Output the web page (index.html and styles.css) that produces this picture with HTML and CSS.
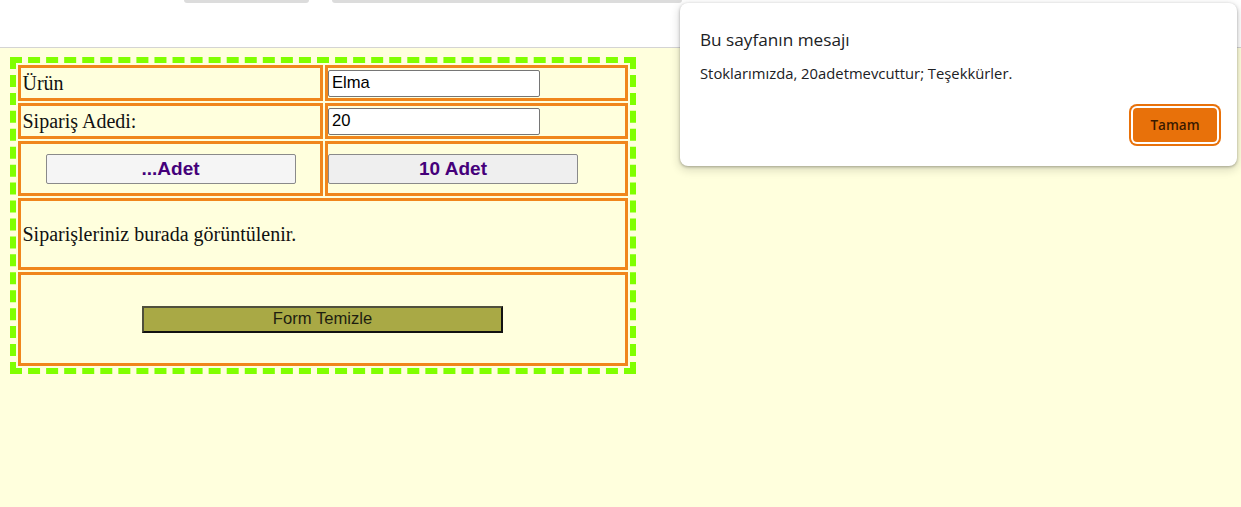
FILE: index.html
```html
<!DOCTYPE html>
<html lang="tr">
<head>
<meta charset="utf-8">
<title>Sipariş Formu</title>
<link rel="stylesheet" href="styles.css">
</head>
<body>
<header class="chrome">
  <div class="chrome-strip">
    <span class="strip strip-a"></span>
    <span class="strip strip-b"></span>
  </div>
</header>
<main class="page">
  <table class="order">
    <tr class="row-field">
      <td class="label col-left">Ürün</td>
      <td class="field col-right"><input class="text-input" type="text" value="Elma"></td>
    </tr>
    <tr class="row-field">
      <td class="label col-left">Sipariş Adedi:</td>
      <td class="field col-right"><input class="text-input" type="text" value="20"></td>
    </tr>
    <tr class="row-buttons">
      <td class="center col-left"><button class="qty-btn qty-btn-light" type="button">...Adet</button></td>
      <td class="field col-right"><button class="qty-btn" type="button">10 Adet</button></td>
    </tr>
    <tr class="row-output">
      <td colspan="2" class="label">Siparişleriniz burada görüntülenir.</td>
    </tr>
    <tr class="row-reset">
      <td colspan="2" class="center"><button class="reset-btn" type="button">Form Temizle</button></td>
    </tr>
  </table>
</main>
<div class="dialog">
  <div class="dialog-title">Bu sayfanın mesajı</div>
  <div class="dialog-message">Stoklarımızda, 20adetmevcuttur; Teşekkürler.</div>
  <div class="dialog-actions">
    <button class="dialog-btn" type="button">Tamam</button>
  </div>
</div>
</body>
</html>
```
FILE: styles.css
```css
html, body {
  margin: 0;
  padding: 0;
}

body {
  background: #ffffdd;
  font-family: "Liberation Serif", "Times New Roman", serif;
  color: #111;
  min-height: 507px;
  position: relative;
}

.chrome {
  height: 47px;
  background: #ffffff;
  border-bottom: 1px solid #d4d4d4;
}

.chrome-strip {
  display: flex;
  padding-left: 184px;
  gap: 23px;
}

.strip {
  display: block;
  height: 3px;
  background: #dcdcdc;
  border-radius: 0 0 4px 4px;
}

.strip-a { width: 125px; }
.strip-b { width: 350px; }

.page {
  padding: 9px 0 0 10px;
}

.order {
  border: 6px dashed #80ff00;
  border-spacing: 2px;
}

.order td {
  box-sizing: border-box;
  border: 3px solid #f0861c;
  padding: 0 2px;
  font-size: 20px;
  vertical-align: middle;
}

.order td.col-left { width: 305px; }
.order td.col-right { width: 303px; }

.order td.label { padding-left: 1.5px; }
.order td.field { padding: 0; }
.order td.center { text-align: center; }

.row-field td { height: 36px; }
.row-buttons td { height: 55px; }
.row-output td { height: 72px; }
.row-reset td { height: 94px; }

.text-input {
  display: block;
  box-sizing: border-box;
  width: 212px;
  height: 27px;
  margin: 0;
  padding: 1px 3px;
  border: 1px solid #767676;
  border-radius: 2px;
  background: #ffffff;
  font-family: "Liberation Sans", Arial, sans-serif;
  font-size: 16.6px;
  color: #000;
}

.qty-btn {
  box-sizing: border-box;
  width: 250px;
  height: 30px;
  margin: 0;
  padding: 0;
  border: 1px solid #8a8a8a;
  border-radius: 2px;
  background: #efefef;
  font-family: "Liberation Sans", Arial, sans-serif;
  font-weight: bold;
  font-size: 19px;
  color: #45007a;
  vertical-align: middle;
}

.qty-btn-light {
  background: #f5f5f5;
}

.reset-btn {
  box-sizing: border-box;
  width: 361px;
  height: 27px;
  margin: 0 0 0 -1px;
  padding: 0;
  border: 2px solid;
  border-color: #50503c #111 #111 #50503c;
  background: #a9a945;
  font-family: "Liberation Sans", Arial, sans-serif;
  font-size: 16.6px;
  color: #1e1e10;
  vertical-align: middle;
}

.dialog {
  position: absolute;
  left: 680px;
  top: 3px;
  width: 557px;
  height: 163px;
  box-sizing: border-box;
  padding: 24px 20px 20px 20px;
  background: #ffffff;
  border-radius: 8px;
  box-shadow: 0 1px 3px rgba(0, 0, 0, 0.3), 0 3px 8px 2px rgba(0, 0, 0, 0.12);
  display: flex;
  flex-direction: column;
  font-family: "Open Sans", "Noto Sans", sans-serif;
  color: #202124;
}

.dialog-title {
  font-size: 17.2px;
  line-height: 26px;
}

.dialog-message {
  margin-top: 10px;
  font-size: 14.8px;
  line-height: 20px;
}

.dialog-actions {
  margin-top: auto;
  display: flex;
  justify-content: flex-end;
  padding-bottom: 4px;
}

.dialog-btn {
  box-sizing: border-box;
  width: 84px;
  height: 34px;
  margin: 0;
  padding: 0;
  border: none;
  border-radius: 4px;
  background: #e8710a;
  box-shadow: 0 0 0 2px #ffffff, 0 0 0 4px #e8710a;
  font-family: "Open Sans", "Noto Sans", sans-serif;
  font-size: 13.5px;
  font-weight: 600;
  color: #3b1a00;
}
```
